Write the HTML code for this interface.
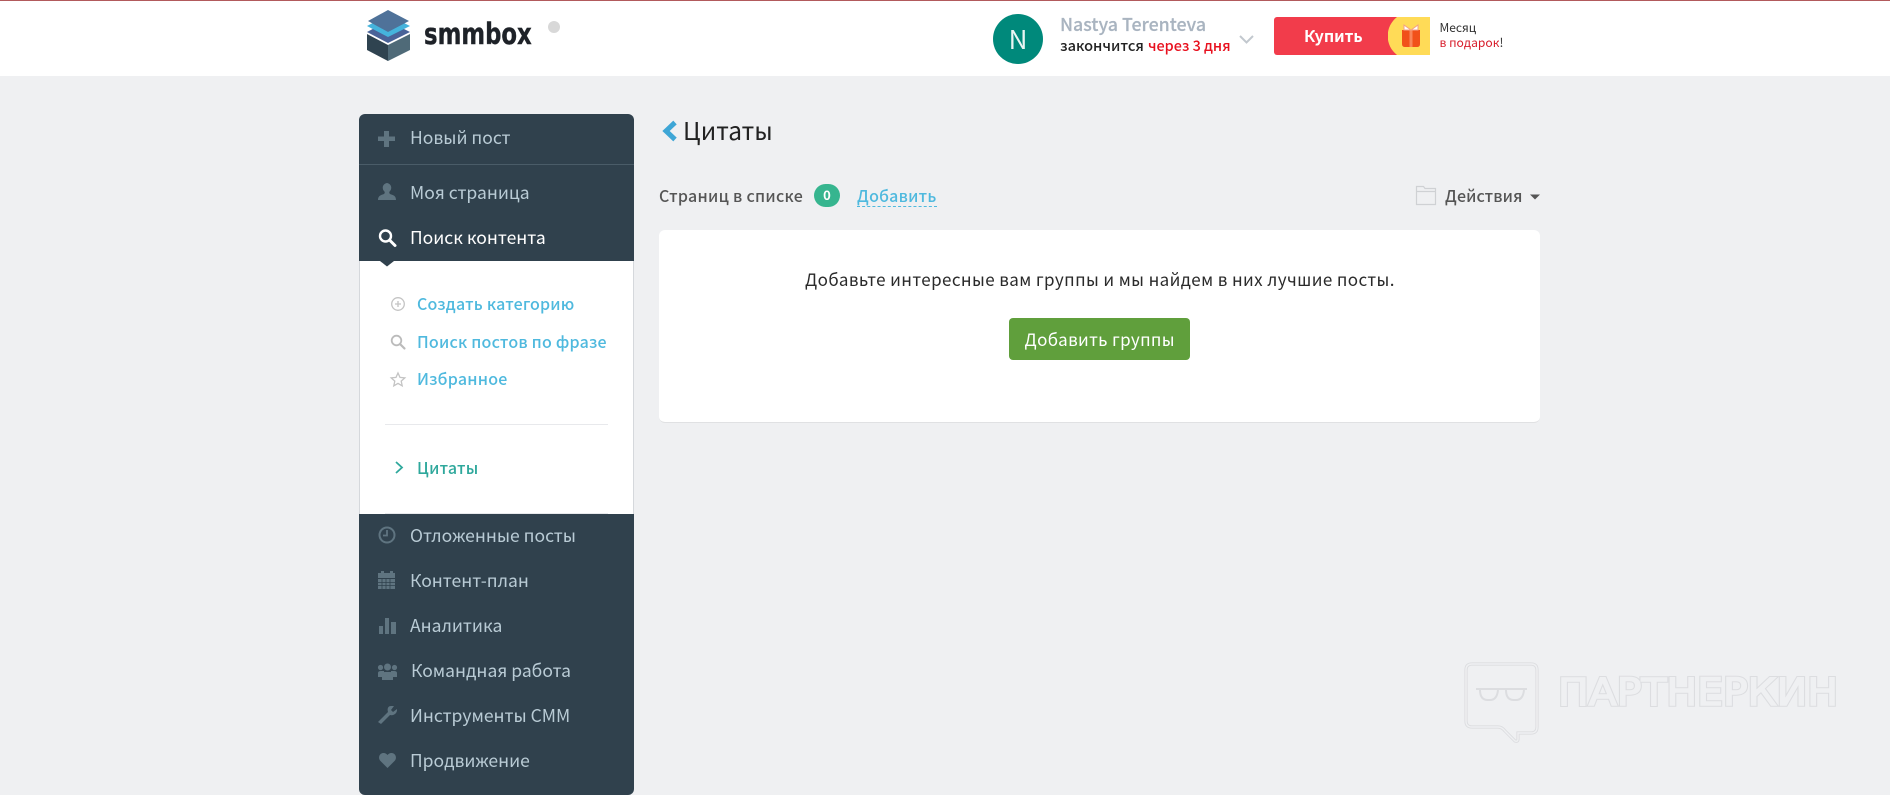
<!DOCTYPE html>
<html lang="ru"><head><meta charset="utf-8"><title>smmbox</title>
<style>
html,body{margin:0;padding:0}
body{width:1890px;height:795px;overflow:hidden;background:#eff0f2;position:relative;font-family:"Noto Sans CJK SC","Liberation Sans",sans-serif}
.b{position:absolute}
.t{position:absolute;white-space:nowrap;line-height:0}
.n{font-size:17.500px;color:#b9cbd5;left:410px}
.s{font-size:16px;letter-spacing:.22px;font-weight:500;color:#4fb9de;left:417px}
svg{position:absolute;left:0;top:0}
</style></head><body>
<div class="b" style="left:0;top:0;width:1890px;height:76px;background:#fff"></div>
<div class="b" style="left:0;top:0;width:1890px;height:1px;background:#b25a5c"></div>

<div class="b" style="left:359px;top:114px;width:275px;height:681px;background:#30414d;border-radius:6px"></div>
<div class="b" style="left:359px;top:164px;width:275px;height:1px;background:#4a5c68"></div>
<div class="b" style="left:359px;top:261px;width:275px;height:253px;background:#fff;border-left:1px solid #d5d8dc;border-right:1px solid #d5d8dc;box-sizing:border-box"></div>
<div class="b" style="left:385px;top:424px;width:223px;height:1px;background:#e8e9ec"></div>
<div class="b" style="left:385px;top:513px;width:223px;height:1px;background:#e8e9ec"></div>

<div class="b" style="left:659px;top:230px;width:881px;height:193px;background:#fff;border-radius:6px;border-bottom:1px solid #e0e1e3;box-sizing:border-box"></div>
<div class="b" style="left:1009px;top:318px;width:181px;height:42px;background:#609f3c;border-radius:4px"></div>
<div class="b" style="left:814px;top:184px;width:26px;height:23px;background:#36b58f;border-radius:12px"></div>
<div class="b" style="left:857px;top:206px;width:80px;border-top:1px dashed #4fb9de"></div>
<div class="b" style="left:993px;top:14px;width:50px;height:50px;background:#00897b;border-radius:50%"></div>
<div class="b" style="left:1274px;top:17px;width:156px;height:38px;background:#f23c4b;border-radius:3px 0 0 3px"></div>

<svg width="1890" height="795" viewBox="0 0 1890 795">
  <!-- logo -->
  <path d="M367 34L388 45L388 61L367 50Z" fill="#2f4350"/>
  <path d="M388 45L410 34V50L388 61Z" fill="#4f6a78"/>
  <path d="M367 32L388 21L410 32L388 43Z" fill="#4a6398"/>
  <path d="M367 26L388 15L410 26L388 37Z" fill="#45b4dc"/>
  <path d="M368 21L388 10L409 21L388 32Z" fill="#4f7299"/>
  <circle cx="554" cy="27" r="6" fill="#d8d8d8"/>
  <!-- gift -->
  <path d="M1388 17h42v38h-42z" fill="#ffdb57"/>
  <path d="M1388 17h9a24 24 0 0 0 0 38h-9z" fill="#f23c4b"/>
  <path d="M1402 30h18v14q0 3-3 3h-12q-3 0-3-3z" fill="#f1501a"/>
  <path d="M1409.500 30h3v17h-3z" fill="#f9865a"/>
  <path d="M1404 25l7 5 7-5v5h-14z" fill="#fff" stroke="#f3a184" stroke-width="1"/>
  <!-- user chevron -->
  <path d="M1240 36l6.500 6.500 6.500-6.500" fill="none" stroke="#c2c8ce" stroke-width="2"/>
  <!-- nav icons -->
  <path d="M378 136.500h6v-5.500h5v5.500h6v4.500h-6v6h-5v-6h-6z" fill="#5f7480"/>
  <path d="M378 200c0-5 4-5 6-6 1-1 1-2 0-3-2-2-2-7 3-8 5 1 5 6 3 8-1 1-1 2 0 3 2 1 6 1 6 6z" fill="#5f7480"/>
  <circle cx="385.500" cy="236" r="5.500" fill="none" stroke="#fff" stroke-width="2.400"/>
  <path d="M390 240.500l5 5" stroke="#fff" stroke-width="3" stroke-linecap="round"/>
  <path d="M380 261h14l-7 5.500z" fill="#30414d"/>
  <circle cx="387" cy="535" r="7.500" fill="none" stroke="#5f7480" stroke-width="2"/>
  <path d="M387 530v5.500h-4" fill="none" stroke="#5f7480" stroke-width="1.800"/>
  <path d="M378 573h3v-2h3v2h6v-2h3v2h2v5h-17z" fill="#5f7480"/>
  <path d="M378 579h17v10h-17z" fill="#5f7480"/>
  <path d="M378 582.500h17M378 585.500h17M382 579v10M386 579v10M390 579v10" stroke="#30414d" stroke-width=".8"/>
  <path d="M379 626h4v8h-4zM385 618h4v16h-4zM391 622h5v12h-5z" fill="#5f7480"/>
  <circle cx="387.500" cy="667" r="3.500" fill="#5f7480"/><circle cx="380.500" cy="667.500" r="2.600" fill="#5f7480"/><circle cx="394.500" cy="667.500" r="2.600" fill="#5f7480"/>
  <path d="M378 677v-4q0-2 3-2h3v2l-1 4zM397 677v-4q0-2-3-2h-3v2l1 4z" fill="#5f7480"/>
  <path d="M382 680v-6q0-2 3-2h5q3 0 3 2v6z" fill="#5f7480"/>
  <path d="M378 722l10-10c-1-3 0-6 3-6h3l-3 4 2 2 4-3c.500 4-3 7-7 6l-9 9z" fill="#5f7480"/>
  <path d="M387.500 768l-7-7c-3-3-1-8 3-8 2 0 3 1 4 2 1-1 2-2 4-2 4 0 6 5 3 8z" fill="#5f7480"/>
  <!-- sub icons -->
  <circle cx="398" cy="304" r="6.300" fill="none" stroke="#c4c4c4" stroke-width="1.300"/>
  <path d="M395 304h6M398 301v6" stroke="#c4c4c4" stroke-width="1.300"/>
  <circle cx="396.500" cy="340.500" r="4.800" fill="none" stroke="#bbb" stroke-width="1.800"/>
  <path d="M400 344l4.500 4.500" stroke="#bbb" stroke-width="2.200" stroke-linecap="round"/>
  <path d="M398 373l2 4.400 4.800.5-3.600 3.200 1 4.700-4.200-2.400-4.200 2.400 1-4.700-3.600-3.200 4.800-.5z" fill="none" stroke="#c4c4c4" stroke-width="1.300"/>
  <path d="M396 462l6 5.500-6 5.500" fill="none" stroke="#2fa89c" stroke-width="1.800"/>
  <!-- back chevron -->
  <path d="M675 122.500l-9 8.500 9 8.500" fill="none" stroke="#3ea6d6" stroke-width="5"/>
  <!-- folder -->
  <path d="M1416.500 204.500v-18h7l1.500 2h10.500v16z" fill="none" stroke="#cfd1d4" stroke-width="1.200"/>
  <path d="M1416.500 191.500h19" stroke="#cfd1d4" stroke-width="1.200"/>
  <path d="M1530 194.500h10l-5 5z" fill="#555"/>
  <!-- watermark -->
  <path d="M1472 664h59q6 0 6 6v57q0 6-6 6h-13v6q0 3-3 2l-10-10q-3-4-7-4h-26q-6 0-6-6v-51q0-6 6-6z" fill="none" stroke="#dcdde0" stroke-width="3.200"/>
  <path d="M1472 664h59q6 0 6 6v57q0 6-6 6h-13v6q0 3-3 2l-10-10q-3-4-7-4h-26q-6 0-6-6v-51q0-6 6-6z" fill="none" stroke="#eff0f2" stroke-width="1.400"/>
  <path d="M1476 689h51M1480 690q0 10 8 10h2q7 0 8-10M1506 690q0 10 8 10h2q7 0 8-10" fill="none" stroke="#dcdde0" stroke-width="2"/>
  <text x="1558" y="705" font-family="'DejaVu Sans',sans-serif" font-size="37" textLength="280" lengthAdjust="spacingAndGlyphs" fill="none" stroke="#dcdde0" stroke-width="3.400">ПАРТНЕРКИН</text>
  <text x="1558" y="705" font-family="'DejaVu Sans',sans-serif" font-size="37" textLength="280" lengthAdjust="spacingAndGlyphs" fill="#eff0f2" stroke="#eff0f2" stroke-width="1.400">ПАРТНЕРКИН</text>
</svg>

<div class="t" style="left:424px;top:37.100px;font:700 22.800px/0 'DejaVu Sans',sans-serif;color:#1e2228;transform:scaleY(1.27);transform-origin:0 7.900px;-webkit-text-stroke:.3px #1e2228">smmbox</div>

<div class="t" style="left:993px;width:50px;text-align:center;top:39px;font-size:26px;color:#e9f5f3">N</div>
<div class="t" style="left:1060px;top:24px;font-size:17.800px;font-weight:500;color:#a9b4c0;-webkit-text-stroke:.2px #a9b4c0">Nastya Terenteva</div>
<div class="t" style="left:1060px;top:45.900px;font-size:14.600px;font-weight:500;color:#222">закончится</div>
<div class="t" style="left:1148px;top:45.900px;font-size:14.400px;font-weight:500;color:#e8101e">через 3 дня</div>
<div class="t" style="left:1304px;top:34.700px;font-size:16px;font-weight:700;color:#fff">Купить</div>
<div class="t" style="left:1439.500px;top:27.800px;font-size:12px;color:#333">Месяц</div>
<div class="t" style="left:1439.500px;top:42.800px;font-size:12.100px;color:#d81e2c">в подарок<span style="color:#333">!</span></div>

<div class="t n" style="top:138.400px">Новый пост</div>
<div class="t n" style="top:193.400px">Моя страница</div>
<div class="t n" style="top:238.400px;color:#fff">Поиск контента</div>
<div class="t s" style="top:302.700px">Создать категорию</div>
<div class="t s" style="top:340.700px">Поиск постов по фразе</div>
<div class="t s" style="top:377.700px">Избранное</div>
<div class="t s" style="top:466.700px;color:#2fa89c">Цитаты</div>
<div class="t n" style="top:536.400px">Отложенные посты</div>
<div class="t n" style="top:581.400px">Контент-план</div>
<div class="t n" style="top:626.400px">Аналитика</div>
<div class="t n" style="top:671.400px;left:411px">Командная работа</div>
<div class="t n" style="top:716.400px">Инструменты СММ</div>
<div class="t n" style="top:761.400px">Продвижение</div>

<div class="t" style="left:683px;top:131.200px;font-size:24.500px;color:#222">Цитаты</div>
<div class="t" style="left:659px;top:194.500px;font-size:16px;letter-spacing:.3px;font-weight:500;color:#555">Страниц в списке</div>
<div class="t" style="left:814px;width:26px;text-align:center;top:195.300px;font-size:13px;font-weight:700;color:#fff">0</div>
<div class="t" style="left:857px;top:194.500px;font-size:16px;letter-spacing:.25px;font-weight:500;color:#4fb9de">Добавить</div>
<div class="t" style="left:1445px;top:194.500px;font-size:16px;letter-spacing:.1px;font-weight:500;color:#555">Действия</div>
<div class="t" style="left:805px;top:279px;font-size:17px;letter-spacing:.4px;color:#2a2a2a">Добавьте интересные вам группы и мы найдем в них лучшие посты.</div>
<div class="t" style="left:1024.500px;top:338.500px;font-size:17px;letter-spacing:.33px;color:#fff">Добавить группы</div>
</body></html>
